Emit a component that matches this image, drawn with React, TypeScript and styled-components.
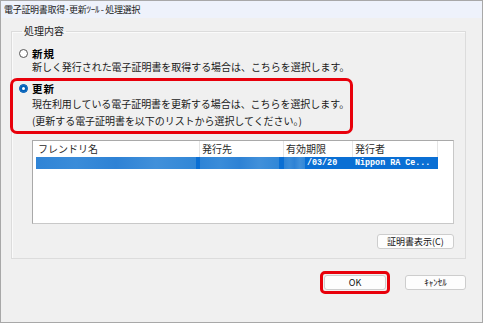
import React from "react"
import styled, { createGlobalStyle } from "styled-components"

const GlobalStyle = createGlobalStyle`
  html, body {
    margin: 0;
    padding: 0;
    background: #ffffff;
  }
  body {
    font-family: "Noto Sans CJK JP", "Noto Sans", sans-serif;
    font-size: 10px;
    color: #000;
  }
`

const Window = styled.div`
  box-sizing: border-box;
  width: 483px;
  height: 323px;
  border: 1px solid #a8a8a8;
  background: #f0f0f0;
  display: flex;
  flex-direction: column;
`

const TitleBar = styled.div`
  height: 17px;
  padding-left: 3px;
  display: flex;
  align-items: center;
  background: #eef2fb;
  font-size: 9px;
  color: #1a1a1a;
  letter-spacing: -0.3px;
`

const Body = styled.div`
  padding: 7px 16px 0 10px;
  display: flex;
  flex-direction: column;
`

const Group = styled.fieldset`
  margin: 0;
  width: 455px;
  box-sizing: border-box;
  border: 1px solid #dcdcdc;
  box-shadow: inset 1px 1px 0 #fafafa;
  padding: 9px 11px 9px 7px;
  display: flex;
  flex-direction: column;
  min-inline-size: 0;
`

const Legend = styled.legend`
  padding: 0 2px;
  margin-left: 3px;
  height: 12px;
  line-height: 12px;
  font-size: 10px;
  color: #1a1a1a;
`

const RadioRow = styled.div`
  height: 14px;
  display: flex;
  align-items: center;
  gap: 4px;
`

const Radio = styled.span<{ $checked?: boolean }>`
  box-sizing: border-box;
  width: 9px;
  height: 9px;
  border-radius: 50%;
  background: ${p => (p.$checked ? "#005fb8" : "#ffffff")};
  border: 1px solid ${p => (p.$checked ? "#005fb8" : "#555")};
  box-shadow: ${p => (p.$checked ? "inset 0 0 0 2px #005fb8, inset 0 0 0 4px #ffffff" : "none")};
  flex: none;
`

const OptionLabel = styled.span`
  font-weight: 700;
  font-size: 10.5px;
  letter-spacing: 1px;
`

const Desc = styled.div<{ $h?: number }>`
  height: ${p => p.$h ?? 14}px;
  line-height: ${p => p.$h ?? 14}px;
  padding-left: 13px;
  font-size: 10px;
  letter-spacing: -0.05px;
  color: #1a1a1a;
  white-space: nowrap;
`

const Highlight = styled.div`
  box-sizing: border-box;
  width: 343px;
  margin: 4px 0 0 -9px;
  padding: 0 0 2px 6px;
  border: 3px solid #e8000b;
  border-radius: 7px;
  display: flex;
  flex-direction: column;
`

const ListBox = styled.div`
  box-sizing: border-box;
  margin: 6px 0 0 13px;
  width: 422px;
  height: 84px;
  background: #ffffff;
  border: 1px solid #a9a9a9;
  border-right-color: #c8c8c8;
  border-bottom-color: #c8c8c8;
  padding-left: 3px;
  display: flex;
  flex-direction: column;
`

const HeaderRow = styled.div`
  display: flex;
  height: 16px;
`

const HeaderCell = styled.div<{ $w: number }>`
  box-sizing: border-box;
  width: ${p => p.$w}px;
  padding-left: 2px;
  border-right: 1px solid #e5e5e5;
  line-height: 16px;
  font-size: 10px;
  color: #2a2a2a;
  white-space: nowrap;
  overflow: hidden;
`

const DataRow = styled.div`
  display: flex;
  height: 12px;
  width: 402px;
  background: #0a6fd4;
`

const DataCell = styled.div<{ $w: number }>`
  box-sizing: border-box;
  width: ${p => p.$w}px;
  display: flex;
  align-items: center;
  overflow: hidden;
`

const Blur = styled.div<{ $w: number }>`
  width: ${p => p.$w}px;
  height: 100%;
  flex: none;
  background: linear-gradient(90deg, #2f84d6 0%, #3a8cd9 25%, #2e82d5 50%, #4190da 75%, #3187d7 100%);
`

const MonoText = styled.span`
  padding-left: 2px;
  font-family: "Liberation Mono", "DejaVu Sans Mono", monospace;
  font-size: 8.4px;
  font-weight: 700;
  color: #ffffff;
  white-space: nowrap;
`

const ActionRow = styled.div`
  display: flex;
  justify-content: flex-end;
  margin-top: 10px;
`

const Button = styled.button<{ $w: number }>`
  box-sizing: border-box;
  width: ${p => p.$w}px;
  height: 15px;
  padding: 0;
  background: #fdfdfd;
  border: 1px solid #cdcdcd;
  border-radius: 3px;
  font-family: "Noto Sans CJK JP", "Noto Sans", sans-serif;
  font-size: 9px;
  line-height: 13px;
  color: #111;
`

const Footer = styled.div`
  width: 455px;
  margin-top: 12px;
  display: flex;
  justify-content: flex-end;
  align-items: center;
  gap: 15px;
`

const ButtonMark = styled.div`
  box-sizing: border-box;
  padding: 0 1px;
  height: 23px;
  border: 3px solid #e8000b;
  border-radius: 5px;
  display: flex;
  align-items: center;
`

export default function App() {
  return (
    <>
      <GlobalStyle />
      <Window>
        <TitleBar>電子証明書取得･更新ﾂｰﾙ - 処理選択</TitleBar>
        <Body>
          <Group>
            <Legend>処理内容</Legend>
            <RadioRow>
              <Radio />
              <OptionLabel>新規</OptionLabel>
            </RadioRow>
            <Desc>新しく発行された電子証明書を取得する場合は、こちらを選択します。</Desc>
            <Highlight>
              <RadioRow>
                <Radio $checked />
                <OptionLabel>更新</OptionLabel>
              </RadioRow>
              <Desc $h={17}>現在利用している電子証明書を更新する場合は、こちらを選択します。</Desc>
              <Desc $h={17}>(更新する電子証明書を以下のリストから選択してください。)</Desc>
            </Highlight>
            <ListBox>
              <HeaderRow>
                <HeaderCell $w={164}>フレンドリ名</HeaderCell>
                <HeaderCell $w={84}>発行先</HeaderCell>
                <HeaderCell $w={69}>有効期限</HeaderCell>
                <HeaderCell $w={85}>発行者</HeaderCell>
              </HeaderRow>
              <DataRow>
                <DataCell $w={164}><Blur $w={160} /></DataCell>
                <DataCell $w={84}><Blur $w={79} /></DataCell>
                <DataCell $w={69}>
                  <Blur $w={21} />
                  <MonoText>/03/20</MonoText>
                </DataCell>
                <DataCell $w={85}><MonoText>Nippon RA Ce...</MonoText></DataCell>
              </DataRow>
            </ListBox>
            <ActionRow>
              <Button $w={77}>証明書表示(C)</Button>
            </ActionRow>
          </Group>
          <Footer>
            <ButtonMark>
              <Button $w={62}>OK</Button>
            </ButtonMark>
            <Button $w={61}>ｷｬﾝｾﾙ</Button>
          </Footer>
        </Body>
      </Window>
    </>
  )
}
